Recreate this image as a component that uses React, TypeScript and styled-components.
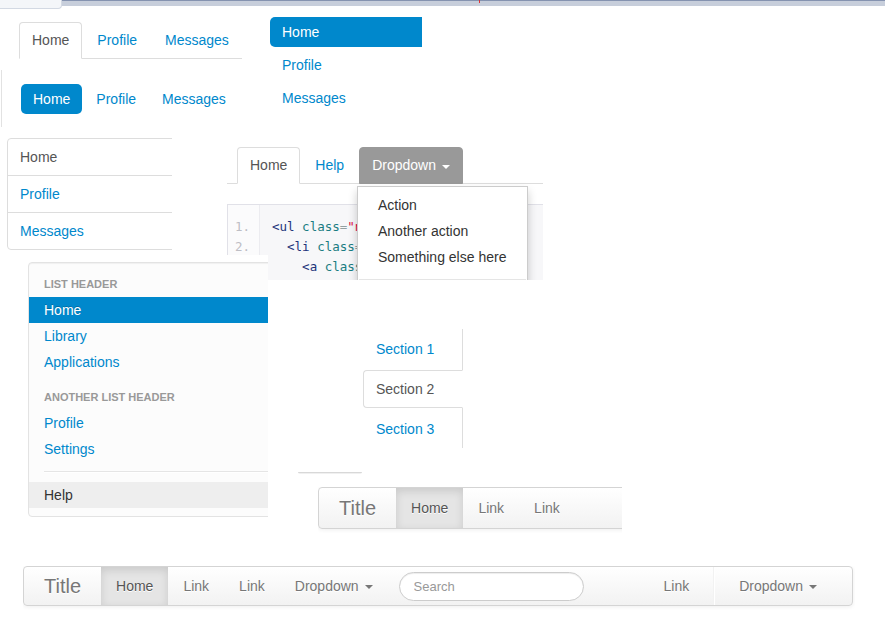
import React from 'react';
import styled, { createGlobalStyle, css } from 'styled-components';

const GlobalStyle = createGlobalStyle`
  html, body {
    margin: 0;
    padding: 0;
    background: #fff;
  }
  body {
    font-family: "Liberation Sans", Arial, Helvetica, sans-serif;
    font-size: 14px;
    color: #333;
  }
  * {
    box-sizing: border-box;
  }
  ul, ol {
    margin: 0;
    padding: 0;
    list-style: none;
  }
`;

const LINK = '#0088cc';

// the page is a collage of clipped snippets, each frame sits where it was cut out
const Canvas = styled.div`
  position: relative;
  width: 885px;
  height: 620px;
  overflow: hidden;
  background: #fff;
`;

const Frame = styled.div`
  position: absolute;
  overflow: hidden;
`;

const WindowEdge = styled(Frame)`
  left: 0;
  top: 0;
  width: 885px;
  height: 6px;
  background: #c7cedb;
  border-top: 1px solid #8593b0;
`;

const WindowTab = styled(Frame)`
  left: 0;
  top: 0;
  width: 62px;
  height: 9px;
  background: #f4f6f9;
  border-right: 1px solid #d3d9e3;
  border-bottom: 1px solid #d3d9e3;
  border-radius: 0 0 4px 0;
`;

const WindowMark = styled(Frame)`
  left: 479px;
  top: 0;
  width: 1px;
  height: 3px;
  background: #d33;
`;

const ClippedEdge = styled(Frame)`
  left: 1px;
  top: 70px;
  width: 1px;
  height: 57px;
  background: #e2e2e2;
`;

const TopTabsFrame = styled(Frame)`
  left: 19px;
  top: 22px;
  width: 223px;
  height: 40px;
`;

const PillsFrame = styled(Frame)`
  left: 21px;
  top: 84px;
  width: 240px;
  height: 32px;
`;

const StackedPillsFrame = styled(Frame)`
  left: 270px;
  top: 17px;
  width: 152px;
  height: 100px;
`;

const StackedTabsFrame = styled(Frame)`
  left: 7px;
  top: 138px;
  width: 165px;
  height: 112px;
`;

const DropdownFrame = styled(Frame)`
  left: 227px;
  top: 147px;
  width: 316px;
  height: 133px;
`;

const NavListFrame = styled(Frame)`
  left: 20px;
  top: 255px;
  width: 248px;
  height: 266px;
  padding: 7px 0 0 8px;
  background: #fff;
`;

const SectionsFrame = styled(Frame)`
  left: 298px;
  top: 329px;
  width: 170px;
  height: 150px;
`;

const SmallNavbarFrame = styled(Frame)`
  left: 318px;
  top: 487px;
  width: 304px;
  height: 46px;
`;

const NavbarFrame = styled(Frame)`
  left: 23px;
  top: 566px;
  width: 832px;
  height: 46px;
`;

/* tabs */
const TabRow = styled.ul<{ $pad?: number }>`
  display: flex;
  padding-left: ${(p) => p.$pad ?? 0}px;
  border-bottom: 1px solid #ddd;
`;

const Tab = styled.li<{ $active?: boolean; $open?: boolean }>`
  display: flex;
  align-items: center;
  margin-right: 2px;
  margin-bottom: -1px;
  padding: 8px 12px;
  line-height: 19px;
  border: 1px solid transparent;
  border-radius: 4px 4px 0 0;
  color: ${LINK};
  white-space: nowrap;
  ${(p) =>
    p.$active &&
    css`
      color: #555;
      background: #fff;
      border-color: #ddd #ddd transparent;
    `}
  ${(p) =>
    p.$open &&
    css`
      color: #fff;
      background: #999;
      border-color: #999;
    `}
`;

const Caret = styled.span<{ $color: string }>`
  display: inline-block;
  width: 0;
  height: 0;
  margin-left: 6px;
  margin-top: 2px;
  border-top: 4px solid ${(p) => p.$color};
  border-left: 4px solid transparent;
  border-right: 4px solid transparent;
`;

/* pills */
const PillRow = styled.ul<{ $stacked?: boolean }>`
  display: flex;
  flex-direction: ${(p) => (p.$stacked ? 'column' : 'row')};
  width: ${(p) => (p.$stacked ? '220px' : 'auto')};
`;

const Pill = styled.li<{ $active?: boolean; $stacked?: boolean }>`
  padding: 8px 12px;
  line-height: 14px;
  border-radius: 5px;
  margin: ${(p) => (p.$stacked ? '0 0 3px' : '0 2px 0 0')};
  color: ${LINK};
  white-space: nowrap;
  ${(p) =>
    p.$active &&
    css`
      color: #fff;
      background: ${LINK};
    `}
`;

/* stacked tabs */
const StackedTabs = styled.ul`
  width: 200px;
  border: 1px solid #ddd;
  border-radius: 4px;
`;

const StackedTab = styled.li<{ $active?: boolean }>`
  padding: 8px 12px;
  line-height: 20px;
  border-top: 1px solid #ddd;
  color: ${(p) => (p.$active ? '#555' : LINK)};
  &:first-child {
    border-top: none;
  }
`;

/* code sample */
const Code = styled.ol`
  width: 330px;
  margin-top: 20px;
  padding: 12px 0 12px;
  background: #f7f7f9;
  border: 1px solid #e1e1e8;
  font-family: "DejaVu Sans Mono", "Liberation Mono", monospace;
  font-size: 12.5px;
  line-height: 20px;
  box-shadow: inset 31px 0 0 #fbfbfc, inset 32px 0 0 #ececf0;
`;

const CodeLine = styled.li`
  display: flex;
  white-space: pre;
`;

const LineNo = styled.span`
  width: 44px;
  padding-left: 7px;
  color: #bebec5;
`;

const Tok = styled.span<{ $kind: 'tag' | 'atn' | 'pun' | 'atv' }>`
  color: ${(p) =>
    ({ tag: '#1e347b', atn: '#1b7d82', pun: '#93a1a1', atv: '#d14' })[p.$kind]};
`;

const DropMenu = styled.ul`
  position: absolute;
  left: 130px;
  top: 39px;
  width: 171px;
  padding: 5px 0;
  background: #fff;
  border: 1px solid rgba(0, 0, 0, 0.2);
  border-radius: 0 0 6px 6px;
  box-shadow: 0 5px 10px rgba(0, 0, 0, 0.2);
`;

const MenuItem = styled.li`
  padding: 3px 20px;
  line-height: 20px;
  color: #333;
  white-space: nowrap;
`;

const MenuDivider = styled.li`
  height: 2px;
  margin: 9px 1px;
  background: #e5e5e5;
  border-bottom: 1px solid #fff;
`;

/* nav list */
const Well = styled.div`
  width: 270px;
  padding: 8px 0;
  background: #fcfcfc;
  border: 1px solid #e3e3e3;
  border-radius: 4px;
  box-shadow: inset 0 1px 1px rgba(0, 0, 0, 0.05);
`;

const ListHeader = styled.li<{ $gap?: boolean }>`
  margin-top: ${(p) => (p.$gap ? 9 : 0)}px;
  padding: 3px 15px;
  line-height: 20px;
  font-size: 11px;
  font-weight: bold;
  color: #999;
  text-transform: uppercase;
  text-shadow: 0 1px 0 rgba(255, 255, 255, 0.5);
`;

const ListItem = styled.li<{ $active?: boolean; $hover?: boolean }>`
  padding: 3px 15px;
  line-height: 20px;
  color: ${LINK};
  ${(p) =>
    p.$active &&
    css`
      color: #fff;
      background: ${LINK};
      text-shadow: 0 -1px 0 rgba(0, 0, 0, 0.2);
    `}
  ${(p) =>
    p.$hover &&
    css`
      color: #333;
      background: #eee;
    `}
`;

const ListDivider = styled.li`
  height: 2px;
  margin: 9px 1px 9px 15px;
  background: #e5e5e5;
  border-bottom: 1px solid #fff;
`;

/* left tabs */
const SideTabs = styled.ul`
  width: 100px;
  margin-left: 65px;
  padding-top: 1px;
  border-right: 1px solid #ddd;
`;

const SideTab = styled.li<{ $active?: boolean }>`
  margin: 0 -1px 2px 0;
  padding: 8px 12px;
  line-height: 20px;
  border: 1px solid transparent;
  border-radius: 4px 0 0 4px;
  color: ${LINK};
  ${(p) =>
    p.$active &&
    css`
      color: #555;
      background: #fff;
      border-color: #ddd transparent #ddd #ddd;
    `}
`;

const PaneFoot = styled.div`
  width: 64px;
  height: 2px;
  margin-top: 24px;
  border-top: 1px solid #d8d8d8;
  border-bottom: 1px solid #f0f0f0;
  border-radius: 0 0 2px 2px;
`;

/* navbars */
const Navbar = styled.div<{ $w: number; $h: number }>`
  display: flex;
  align-items: stretch;
  width: ${(p) => p.$w}px;
  height: ${(p) => p.$h}px;
  padding: 0 20px;
  background: linear-gradient(#ffffff, #f2f2f2);
  border: 1px solid #d4d4d4;
  border-radius: 4px;
  box-shadow: 0 1px 4px rgba(0, 0, 0, 0.065);
`;

const Brand = styled.div`
  display: flex;
  align-items: center;
  margin-left: -20px;
  padding: 0 20px;
  font-size: 20px;
  color: #777;
  text-shadow: 0 1px 0 #fff;
`;

const NavItem = styled.div<{ $active?: boolean }>`
  display: flex;
  align-items: center;
  padding: 0 15px;
  color: #777;
  white-space: nowrap;
  text-shadow: 0 1px 0 #fff;
  ${(p) =>
    p.$active &&
    css`
      color: #555;
      background: #e5e5e5;
      box-shadow: inset 0 3px 8px rgba(0, 0, 0, 0.125);
    `}
`;

const SearchForm = styled.form`
  display: flex;
  align-items: center;
  margin: 0 0 0 11px;
`;

const SearchQuery = styled.input`
  width: 185px;
  height: 29px;
  padding: 4px 14px;
  font-family: "Liberation Sans", Arial, sans-serif;
  font-size: 13px;
  color: #555;
  background: #fff;
  border: 1px solid #ccc;
  border-radius: 15px;
  box-shadow: inset 0 1px 1px rgba(0, 0, 0, 0.075);
  outline: none;
  &::placeholder {
    color: #999;
  }
`;

const RightNav = styled.div`
  display: flex;
  align-items: stretch;
  margin-left: auto;
`;

const VerticalDivider = styled.div`
  width: 2px;
  margin: 0 9px;
  border-left: 1px solid #f2f2f2;
  border-right: 1px solid #fff;
`;

const codeLines: Array<Array<[string, 'tag' | 'atn' | 'pun' | 'atv']>> = [
  [['<ul', 'tag'], [' ', 'pun'], ['class', 'atn'], ['=', 'pun'], ['"nav nav-tabs"', 'atv'], ['>', 'tag']],
  [['  <li', 'tag'], [' ', 'pun'], ['class', 'atn'], ['=', 'pun'], ['"active"', 'atv'], ['>', 'tag']],
  [['    <a', 'tag'], [' ', 'pun'], ['class', 'atn'], ['=', 'pun'], ['"dropdown"', 'atv'], ['>', 'tag']],
];

export default function App() {
  return (
    <>
      <GlobalStyle />
      <Canvas>
        <WindowEdge />
        <WindowTab />
        <WindowMark />
        <ClippedEdge />

        <TopTabsFrame>
          <TabRow>
            <Tab $active>Home</Tab>
            <Tab>Profile</Tab>
            <Tab>Messages</Tab>
          </TabRow>
        </TopTabsFrame>

        <PillsFrame>
          <PillRow>
            <Pill $active>Home</Pill>
            <Pill>Profile</Pill>
            <Pill>Messages</Pill>
          </PillRow>
        </PillsFrame>

        <StackedPillsFrame>
          <PillRow $stacked>
            <Pill $stacked $active>Home</Pill>
            <Pill $stacked>Profile</Pill>
            <Pill $stacked>Messages</Pill>
          </PillRow>
        </StackedPillsFrame>

        <StackedTabsFrame>
          <StackedTabs>
            <StackedTab $active>Home</StackedTab>
            <StackedTab>Profile</StackedTab>
            <StackedTab>Messages</StackedTab>
          </StackedTabs>
        </StackedTabsFrame>

        <DropdownFrame>
          <TabRow $pad={10}>
            <Tab $active>Home</Tab>
            <Tab>Help</Tab>
            <Tab $open>
              Dropdown
              <Caret $color="#fff" />
            </Tab>
          </TabRow>
          <Code>
            {codeLines.map((line, i) => (
              <CodeLine key={i}>
                <LineNo>{i + 1}.</LineNo>
                {line.map(([text, kind], j) => (
                  <Tok key={j} $kind={kind}>
                    {text}
                  </Tok>
                ))}
              </CodeLine>
            ))}
          </Code>
          <DropMenu>
            <MenuItem>Action</MenuItem>
            <MenuItem>Another action</MenuItem>
            <MenuItem>Something else here</MenuItem>
            <MenuDivider />
            <MenuItem>Separated link</MenuItem>
          </DropMenu>
        </DropdownFrame>

        <NavListFrame>
          <Well>
            <ul>
              <ListHeader>List header</ListHeader>
              <ListItem $active>Home</ListItem>
              <ListItem>Library</ListItem>
              <ListItem>Applications</ListItem>
              <ListHeader $gap>Another list header</ListHeader>
              <ListItem>Profile</ListItem>
              <ListItem>Settings</ListItem>
              <ListDivider />
              <ListItem $hover>Help</ListItem>
            </ul>
          </Well>
        </NavListFrame>

        <SectionsFrame>
          <SideTabs>
            <SideTab>Section 1</SideTab>
            <SideTab $active>Section 2</SideTab>
            <SideTab>Section 3</SideTab>
          </SideTabs>
          <PaneFoot />
        </SectionsFrame>

        <SmallNavbarFrame>
          <Navbar $w={420} $h={42}>
            <Brand>Title</Brand>
            <NavItem $active>Home</NavItem>
            <NavItem>Link</NavItem>
            <NavItem>Link</NavItem>
          </Navbar>
        </SmallNavbarFrame>

        <NavbarFrame>
          <Navbar $w={830} $h={40}>
            <Brand>Title</Brand>
            <NavItem $active>Home</NavItem>
            <NavItem>Link</NavItem>
            <NavItem>Link</NavItem>
            <NavItem>
              Dropdown
              <Caret $color="#777" />
            </NavItem>
            <SearchForm onSubmit={(e) => e.preventDefault()}>
              <SearchQuery placeholder="Search" />
            </SearchForm>
            <RightNav>
              <NavItem>Link</NavItem>
              <VerticalDivider />
              <NavItem>
                Dropdown
                <Caret $color="#777" />
              </NavItem>
            </RightNav>
          </Navbar>
        </NavbarFrame>
      </Canvas>
    </>
  );
}
